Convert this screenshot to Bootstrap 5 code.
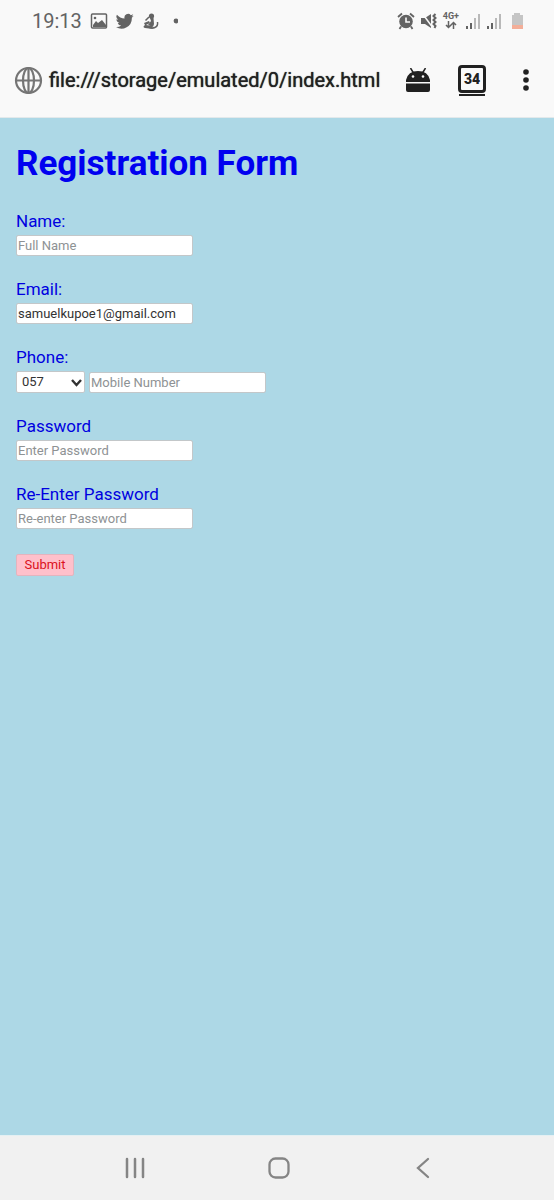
<!DOCTYPE html>
<html lang="en">
<head>
<meta charset="utf-8">
<meta name="viewport" content="width=device-width, initial-scale=1">
<title>Registration Form</title>
<link rel="stylesheet" href="https://cdn.jsdelivr.net/npm/bootstrap@5.3.0/dist/css/bootstrap.min.css">
<style>
  body { font-family: Roboto, "Liberation Sans", sans-serif; background: #add8e6; color: #0000e0; }
  svg { display: block; flex: none; }
  .status-bar { height: 43px; padding: 0 30px 2px 32px; background: #f9f9f9; color: #636363; }
  .status-left { gap: 8px; }
  .status-right { gap: 5px; }
  .clock { font-size: 20px; line-height: 24px; }
  .net-label { font-size: 9px; line-height: 9px; font-weight: 700; }
  .address-bar { height: 75px; padding: 0 16px 0 14px; background: #f9f9f9; color: #212121; border-bottom: 1px solid #e3e9eb; }
  .address { font-size: 20px; line-height: 24px; margin-left: 6px; text-shadow: 0 0 1px #212121; }
  .tool { border: 0; padding: 0; background: none; color: #212121; }
  .tab-count { width: 28px; height: 28px; border: 3px solid #212121; border-radius: 4px; font-size: 14px; line-height: 22px; font-weight: 900; }
  .tab-stack { width: 26px; height: 2px; margin-top: 1px; background: #212121; }
  .page { padding: 25px 16px; }
  .page h1 { font-size: 35px; line-height: 42px; font-weight: 700; color: #0000f0; margin-bottom: 24px; }
  .page label { font-size: 17px; line-height: 24px; padding-bottom: 2px; }
  .field { margin-bottom: 21px; }
  .form-control, .form-select { width: 177px; height: 21px; min-height: 0; padding: 0 1px; font-size: 13px; line-height: 18px; border: 1px solid #c3c7c9; border-radius: 2px; color: #333; background-color: #fff; }
  .form-control::placeholder { color: #8e9294; }
  .form-select { width: 69px; height: 22px; padding: 0 20px 0 5px; background-size: 13px 13px; background-position: right 1px center;
    background-image: url("data:image/svg+xml,%3Csvg xmlns='http://www.w3.org/2000/svg' viewBox='0 0 13 13'%3E%3Cpath d='M2 4l4.5 5L11 4' fill='none' stroke='%23333' stroke-width='2.4'/%3E%3C/svg%3E"); }
  .btn-submit { width: 58px; height: 22px; padding: 0; margin-top: 25px; font-size: 13px; line-height: 18px; border: 1px solid #e3b4be; border-radius: 2px; background: #ffc0cb; color: #dc1020; }
  .system-nav { height: 65px; padding-left: 4px; gap: 120px; background: #f1f1f1; color: #858585; border-top: 1px solid #e4f0f3; }
</style>
</head>
<body class="d-flex flex-column min-vh-100">
<header>
  <div class="status-bar d-flex align-items-center justify-content-between">
    <div class="status-left d-flex align-items-center">
      <span class="clock">19:13</span>
      <svg width="18" height="18" viewBox="0 0 18 18" fill="none" stroke="currentColor"><rect x="1.500" y="2" width="15" height="14" rx="1" stroke-width="1.500"/><path d="M3 13l3-4 2 2 4-3 4 5v2H3z" fill="currentColor" stroke="none"/><circle cx="5" cy="6" r="1.300" fill="currentColor" stroke="none"/></svg>
      <svg width="18" height="18" viewBox="0 0 24 24" fill="currentColor"><path d="M23.6 4.9a9.7 9.7 0 0 1-2.8.8 4.9 4.9 0 0 0 2.1-2.7 9.8 9.8 0 0 1-3.1 1.2 4.9 4.9 0 0 0-8.4 4.5A13.900 13.900 0 0 1 1.300 3.600a4.900 4.900 0 0 0 1.500 6.500 4.900 4.900 0 0 1-2.200-.6 4.900 4.900 0 0 0 3.900 4.900 4.900 4.900 0 0 1-2.200.1 4.900 4.900 0 0 0 4.600 3.400A9.900 9.900 0 0 1-.4 19.900a13.900 13.900 0 0 0 21.500-12.400 10 10 0 0 0 2.500-2.600z"/></svg>
      <svg width="18" height="18" viewBox="0 0 18 18" fill="currentColor"><circle cx="9.500" cy="4" r="2.600"/><path d="M8 6h3.500l.5 6-1 3-5-2 3-4z"/><path d="M15.500 10c1 6-5 7-9 5M7 5L3.500 8.500" fill="none" stroke="currentColor" stroke-width="1.500"/><path d="M2 11l5-2 1 2-4 2 6 1 1 3-8-1q-3-1 0-3z"/></svg>
      <svg class="ms-1" width="6" height="6" viewBox="0 0 6 6"><circle cx="4" cy="3" r="2.400" fill="currentColor"/></svg>
    </div>
    <div class="status-right d-flex align-items-center">
      <svg width="18" height="18" viewBox="0 0 18 18"><circle cx="9" cy="9.500" r="6.800" fill="currentColor"/><path d="M1 5l4-3.500M17 5l-4-3.500M4 14.500L2.500 17M14 14.500l1.500 2.500" stroke="currentColor" stroke-width="1.800"/><path d="M9 5.500V10h4" fill="none" stroke="#f9f9f9" stroke-width="1.600"/></svg>
      <svg width="18" height="18" viewBox="0 0 18 18"><path d="M1 6h4l6-4v14l-6-4H1z" fill="currentColor"/><path d="M2 1l11 15" stroke="#f9f9f9" stroke-width="1.500"/><path d="M15.500 2l-2 2 2 2-2 2 2 2-2 2 2 2-1 2" fill="none" stroke="currentColor" stroke-width="2"/></svg>
      <div class="d-flex flex-column align-items-center">
        <span class="net-label">4G+</span>
        <svg width="12" height="8" viewBox="0 0 12 8" fill="none" stroke="currentColor" stroke-width="1.500"><path d="M3.500 0v6M1 4l2.500 2.500L6 4M8.500 8V2M6 4l2.500-2.500L11 4"/></svg>
      </div>
      <svg width="16" height="18" viewBox="0 0 16 18"><path d="M3 17v-3M7 17v-6" stroke="currentColor" stroke-width="2"/><path d="M11 17V6M15 17V2" stroke="#b9b9b9" stroke-width="2"/></svg>
      <svg width="16" height="18" viewBox="0 0 16 18"><path d="M3 17v-3M7 17v-6" stroke="currentColor" stroke-width="2"/><path d="M11 17V6M15 17V2" stroke="#b9b9b9" stroke-width="2"/></svg>
      <svg class="ms-1" width="14" height="18" viewBox="0 0 14 18"><path d="M4 1h6v2h3v14H2V3h2z" fill="#c5c5c5"/><path d="M2 13h11v4H2z" fill="#f3ae98"/></svg>
    </div>
  </div>
  <div class="address-bar d-flex align-items-center">
    <svg width="29" height="29" viewBox="0 0 29 29" fill="none" stroke="#757575" stroke-width="2.200"><circle cx="14.500" cy="14.500" r="12.500"/><ellipse cx="14.500" cy="14.500" rx="5.500" ry="12.500"/><path d="M14.500 2v25M2 14.500h25"/></svg>
    <span class="address me-auto text-nowrap">file:///storage/emulated/0/index.html</span>
    <button class="tool" type="button" aria-label="Android">
      <svg width="24" height="24" viewBox="0 0 24 24" fill="currentColor"><path d="M0 14V12Q2 3 12 3T24 12v2zM0 15.500h24V22q0 2-2 2H2q-2 0-2-2z"/><path d="M4.500 0l3 5M19.500 0l-3 5" stroke="currentColor" stroke-width="1.500"/><circle cx="7" cy="8.500" r="1.300" fill="#f9f9f9"/><circle cx="17" cy="8.500" r="1.300" fill="#f9f9f9"/></svg>
    </button>
    <button class="tool d-flex flex-column align-items-center mx-4 px-1" type="button" aria-label="Open tabs">
      <span class="tab-count">34</span><span class="tab-stack"></span>
    </button>
    <button class="tool" type="button" aria-label="Menu">
      <svg width="24" height="24" viewBox="0 0 24 24" fill="currentColor"><circle cx="12" cy="4" r="2.800"/><circle cx="12" cy="12" r="2.800"/><circle cx="12" cy="20" r="2.800"/></svg>
    </button>
  </div>
</header>
<main class="page flex-grow-1">
  <h1>Registration Form</h1>
  <form>
    <div class="field"><label class="d-block" for="name">Name:</label><input class="form-control" id="name" type="text" placeholder="Full Name"></div>
    <div class="field"><label class="d-block" for="email">Email:</label><input class="form-control" id="email" type="email" value="samuelkupoe1@gmail.com"></div>
    <div class="field"><label class="d-block" for="phone">Phone:</label>
      <div class="d-flex align-items-end gap-1"><select class="form-select" aria-label="Phone prefix"><option>057</option></select><input class="form-control" id="phone" type="tel" placeholder="Mobile Number"></div>
    </div>
    <div class="field"><label class="d-block" for="password">Password</label><input class="form-control" id="password" type="password" placeholder="Enter Password"></div>
    <div class="field"><label class="d-block" for="confirm">Re-Enter Password</label><input class="form-control" id="confirm" type="password" placeholder="Re-enter Password"></div>
    <button class="btn btn-submit d-block" type="submit">Submit</button>
  </form>
</main>
<nav class="system-nav d-flex align-items-center justify-content-center" aria-label="System">
  <button class="tool text-reset" type="button" aria-label="Recent apps"><svg width="24" height="24" viewBox="0 0 24 24" stroke="currentColor" stroke-width="2.500" stroke-linecap="round"><path d="M4 3v18M12 3v18M20 3v18"/></svg></button>
  <button class="tool text-reset" type="button" aria-label="Home"><svg width="24" height="24" viewBox="0 0 24 24" fill="none" stroke="currentColor" stroke-width="2.300"><rect x="2.500" y="2.500" width="19" height="19" rx="6"/></svg></button>
  <button class="tool text-reset" type="button" aria-label="Back"><svg width="24" height="24" viewBox="0 0 24 24" fill="none" stroke="currentColor" stroke-width="2.300" stroke-linecap="round"><path d="M17 3l-10 9 10 9"/></svg></button>
</nav>
<script src="https://cdn.jsdelivr.net/npm/bootstrap@5.3.0/dist/js/bootstrap.bundle.min.js"></script>
</body>
</html>
